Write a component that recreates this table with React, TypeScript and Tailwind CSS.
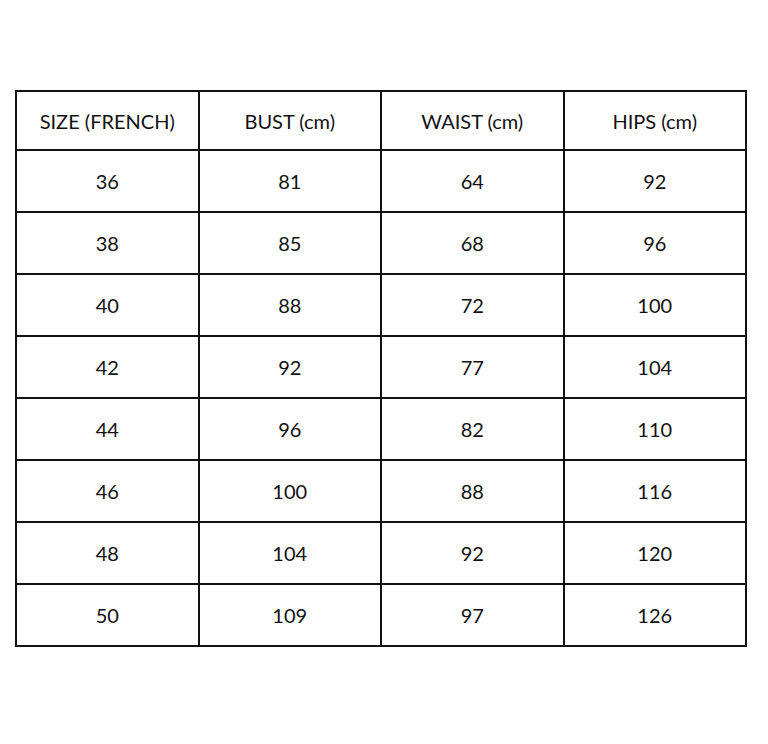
const headers = ["SIZE (FRENCH)", "BUST (cm)", "WAIST (cm)", "HIPS (cm)"]

const rows = [
  ["36", "81", "64", "92"],
  ["38", "85", "68", "96"],
  ["40", "88", "72", "100"],
  ["42", "92", "77", "104"],
  ["44", "96", "82", "110"],
  ["46", "100", "88", "116"],
  ["48", "104", "92", "120"],
  ["50", "109", "97", "126"],
]

export default function App() {
  return (
    <div className="w-[768px] h-[744px] bg-white pt-[90px] pl-[15px] font-['Lato',_'Liberation_Sans',_sans-serif] text-[20px] text-[#111]">
      <table className="border-collapse w-[732px] table-fixed">
        <thead>
          <tr className="h-[59px]">
            {headers.map((h) => (
              <th key={h} className="border-2 border-[#111] font-normal text-center">
                {h}
              </th>
            ))}
          </tr>
        </thead>
        <tbody>
          {rows.map((row) => (
            <tr key={row[0]} className="h-[62px]">
              {row.map((cell, i) => (
                <td key={i} className="border-2 border-[#111] text-center">
                  {cell}
                </td>
              ))}
            </tr>
          ))}
        </tbody>
      </table>
    </div>
  )
}
